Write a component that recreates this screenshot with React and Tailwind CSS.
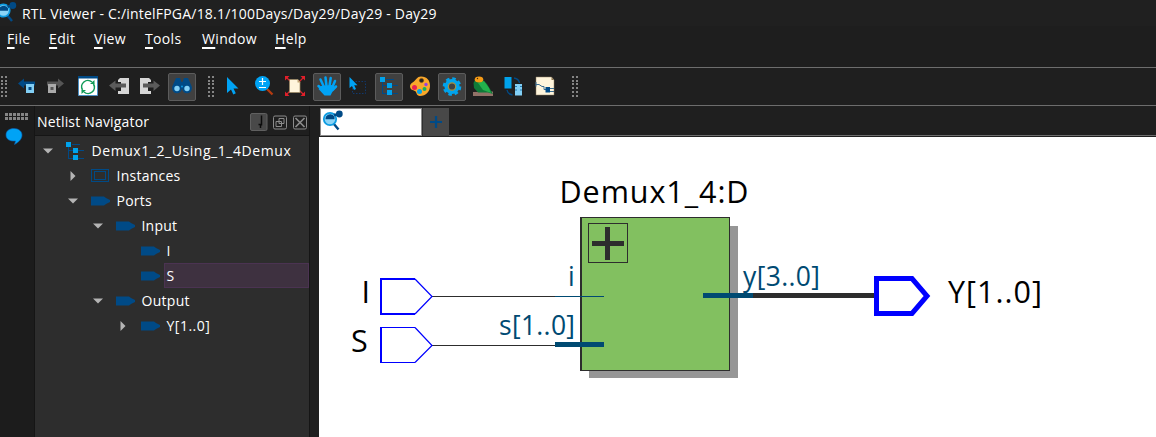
import React from "react";

/* Drawings use window coordinates, so each one crops its own region. */
function Pic({ x, y, w, h, children, className = "" }) {
  return (
    <svg className={"block shrink-0 " + className} width={w} height={h} viewBox={`${x} ${y} ${w} ${h}`}>
      {children}
    </svg>
  );
}

function Slot({ x, w, active, bx, children }) {
  if (active) {
    return (
      <div className="flex h-9 shrink-0 items-center justify-center" style={{ width: w }}>
        <button className="flex h-7 w-7 items-center justify-center rounded-[2px] border border-[#5c5c5c] bg-[#404040]">
          <Pic x={bx + 1} y={74} w={26} h={26}>{children}</Pic>
        </button>
      </div>
    );
  }
  return <Pic x={x} y={69} w={w} h={36}>{children}</Pic>;
}

function Grip({ x, cols = 2 }) {
  const dots = [];
  for (let r = 0; r < 6; r++) {
    for (let c = 0; c < cols; c++) {
      dots.push(<rect key={`${r}-${c}`} x={x + c * 4} y={76 + r * 3.7} width="2" height="2" />);
    }
  }
  return <g fill="#858585" shapeRendering="crispEdges">{dots}</g>;
}

function Viewer({ x, y }) {
  return (
    <g transform={`translate(${x} ${y})`}>
      <path d="M11 13l5 6" stroke="#004a86" strokeWidth="2.4" />
      <circle cx="7.5" cy="8.5" r="6.2" fill="#8ad4f7" stroke="#0d9ce2" strokeWidth="1.8" />
      <path d="M3 8.8a4.8 4.8 0 0 1 9-2.600V8.8Z" fill="#004a86" />
      <circle cx="16.8" cy="3.5" r="3.4" fill="#004a86" />
      <path d="M11 3h4v2l-3 1z" fill="#004a86" />
    </g>
  );
}

function Hierarchy({ x, y }) {
  return (
    <g transform={`translate(${x} ${y})`} shapeRendering="crispEdges">
      <path d="M6 2.500h8M2.500 5v11.500h5M2.500 8.500h5M12 8.500h6M12 16.500h6" fill="none" stroke="#004a86" />
      <path d="M0 0h5v5H0zM7 6h5v5H7zM7 13h5v5H7z" fill="#00a3ec" />
    </g>
  );
}

function Toolbar() {
  return (
    <div className="flex h-[39px] shrink-0 items-center border-y border-[#6d6d6d] bg-[#1f1f1f]">
      <Slot x={0} w={11}><Grip x={-3} cols={3} /></Slot>
      <Slot x={11} w={31}>
        <path d="M18 83.500l6-5v3h11v4H24v3z" fill="#004a86" />
        <path d="M26 84h8v9h-8z" fill="#82cff5" /><path d="M28.500 87h3v3h-3z" fill="#004a86" />
      </Slot>
      <Slot x={42} w={30}>
        <path d="M64 83.500l-6-5v3H47v4h11v3z" fill="#555" />
        <path d="M48 84h8v9h-8z" fill="#aaa" /><path d="M50.500 87h3v3h-3z" fill="#555" />
      </Slot>
      <Slot x={72} w={32}>
        <path d="M78.500 76.500h19v19h-19z" fill="#fff" stroke="#4b8fc3" /><path d="M78 76h20v2.500H78z" fill="#004a86" />
        <path d="M82.500 90a6.300 6.300 0 0 1 9.500-8M93.500 84a6.300 6.300 0 0 1-9.500 8" fill="none" stroke="#119a58" strokeWidth="1.600" />
        <path d="M94.500 80v4h-4.500zM81.500 94v-4H86z" fill="#119a58" />
      </Slot>
      <Slot x={104} w={31}>
        <path d="M120 78h9v16h-11v-3h3v-9h-3v-2z" fill="#d6d6d6" />
        <path d="M109 85.500l6.500-5v3H126v4h-10.500v3.500z" fill="#5b5b5b" />
      </Slot>
      <Slot x={135} w={31}>
        <path d="M140 78h9l2 2v2h-3v9h3v3h-11z" fill="#d6d6d6" />
        <path d="M160 85.500l-6.500-5v3H143v4h10.500v3.500z" fill="#5b5b5b" />
      </Slot>
      <Slot x={166} w={32} active bx={168}>
        <path d="M176 78h4l1.500 4h1l1.500-4h4l3.500 8v3h-19v-3z" fill="#004a86" />
        <circle cx="177" cy="88.500" r="4.800" fill="#004a86" /><circle cx="187" cy="88.500" r="4.800" fill="#004a86" />
        <circle cx="177" cy="88.500" r="2.700" fill="#82cff5" /><circle cx="187" cy="88.500" r="2.700" fill="#82cff5" />
        <circle cx="182" cy="86.500" r="1" fill="#0d9ce2" />
      </Slot>
      <Slot x={198} w={22}><Grip x={208} /></Slot>
      <Slot x={220} w={28}>
        <path d="M227 77v16l4-3.500 2.300 5 2.500-1.200-2.300-4.800h5z" fill="#00a3f5" />
      </Slot>
      <Slot x={248} w={31}>
        <path d="M267 89l5.500 5.500" stroke="#b63b10" strokeWidth="2.300" />
        <circle cx="262.500" cy="83.500" r="7.500" fill="#00a3f5" />
        <path d="M259 81.500h7M262.500 78v7M259 87.500h7" stroke="#fff" strokeWidth="1.200" />
      </Slot>
      <Slot x={279} w={32}>
        <path d="M286 77l18 18M304 77l-18 18" stroke="#d8222b" strokeWidth="1.200" />
        <path d="M285 76h4.500L285 80.500zM305 76h-4.500l4.500 4.500zM285 96h4.500L285 91.500zM305 96h-4.500l4.500-4.500z" fill="#e21f2a" />
        <path d="M289.500 79.500h8.500l2 2.500v10.500h-10.500z" fill="#fff5dc" stroke="#9c8660" strokeWidth=".7" /><path d="M297.500 79.500v3h3z" fill="#c2a574" />
      </Slot>
      <Slot x={311} w={32} active bx={313}>
        <g fill="none" stroke="#00a3f5" strokeLinecap="round" strokeWidth="2.500">
          <path d="M324 87l-3.500-7.500M326.500 86l-1-8.500M329.500 86l1.200-8M332 88l3-7M323 90l-4.500-4M332.500 90l3.500-3.500" />
        </g>
        <path d="M321 86l11-1 3 3-3 4.500-1.500 3h-6L318.500 89z" fill="#00a3f5" />
      </Slot>
      <Slot x={343} w={30}>
        <path d="M352.500 81.500h13v12h-13z" fill="none" stroke="#11396e" strokeDasharray="1.500 1.500" />
        <path d="M349.500 77v11l2.500-2 2 4 2-1-1.800-3.700h3.300z" fill="#00a3f5" />
      </Slot>
      <Slot x={373} w={32} active bx={375}><Hierarchy x={380} y={77} /></Slot>
      <Slot x={405} w={31}>
        <path d="M421 76.500c6 0 9 4 9 9.500s-4 10-10 10c-4 0-3-4-5-5s-5-1-5-5c0-2 2-3 4-4.500 2-1.500 3-5 7-5z" fill="#f8a72b" />
        <circle cx="421.500" cy="80.500" r="2.100" fill="#242424" stroke="#704713" strokeWidth=".6" />
        <circle cx="414.500" cy="87.500" r="2.500" fill="#e92053" /><circle cx="419.500" cy="91.500" r="2.500" fill="#00a3ec" />
        <circle cx="424.500" cy="89" r="2" fill="#14b35d" /><circle cx="426" cy="84.500" r="1.700" fill="#993fe0" />
      </Slot>
      <Slot x={436} w={32} active bx={438}>
        <circle cx="452" cy="86.500" r="7.600" fill="#00a3ec" />
        <circle cx="452" cy="86.500" r="8" fill="none" stroke="#00a3ec" strokeWidth="2.600" strokeDasharray="3.500 2.780" />
        <circle cx="452" cy="86.500" r="3.700" fill="#404040" stroke="#a39346" strokeWidth="1.200" />
      </Slot>
      <Slot x={468} w={30}>
        <path d="M473 92L493 91.500V96H473z" fill="#927268" />
        <path d="M475 80L483 80L487 84L493 94L488 92.500L478 92.500L474 88L473.500 83z" fill="#0f7a38" />
        <path d="M478 83L484 81L489 88L491 93L483 90z" fill="#23b14d" />
        <ellipse cx="479" cy="79.500" rx="4.300" ry="3" fill="#f69b16" />
        <circle cx="477.500" cy="78.500" r=".7" fill="#3b2a10" />
      </Slot>
      <Slot x={498} w={32}>
        <path d="M504.500 77h7v11.500h-7z" fill="#00a3ec" /><path d="M515 84h7v11.500h-7z" fill="#82cff5" />
        <path d="M514 78c3 .5 5 2 5.500 5M507 90c.5 3 2 4.500 5.500 5" fill="none" stroke="#004a86" strokeWidth="1.400" />
        <path d="M515 86.500h2M520 86.500h2M515 90h2M520 90h2" stroke="#257aae" />
      </Slot>
      <Slot x={530} w={31}>
        <path d="M536 77h15.500l2.500 3v15h-18z" fill="#fff5dc" stroke="#8f7f62" strokeWidth=".5" /><path d="M551.500 77v3h2.500z" fill="#8d7651" />
        <path d="M536 84.500h3l3 2h2v3h2M536 82v4.500M549 88.500h5M549 91.500h5" fill="none" stroke="#3c6f94" />
        <path d="M545.500 87h4.500v5.500h-4.500z" fill="#004a86" />
      </Slot>
      <Slot x={561} w={30}><Grip x={572} /></Slot>
    </div>
  );
}

function Arrow({ open }) {
  return (
    <svg className="block shrink-0" width="10" height="10" viewBox="0 0 10 10">
      <path d={open ? "M0 2.500h10L5 7.500z" : "M2.500 0v10L7.500 5z"} fill="#b4b4b4" />
    </svg>
  );
}

function PortIcon() {
  return (
    <svg className="block shrink-0" width="19" height="10" viewBox="0 0 19 10">
      <path d="M0 .5h13l2 1.500 4 2v2l-4 2-2 1.500H0z" fill="#004a86" />
    </svg>
  );
}

function Row({ indent, arrow, icon, label, selected, text = "" }) {
  return (
    <div className={"flex h-[25px] items-center " + indent}>
      <div className="flex w-[23px] shrink-0 items-center">{arrow && <Arrow open={arrow === "open"} />}</div>
      <div className="flex w-[23px] shrink-0 items-center">{icon}</div>
      <div className={"flex h-[25px] grow items-center border pl-[1.5px] whitespace-pre " + (selected ? "border-[#4b3352] bg-[#3e3140]" : "border-transparent")}>
        <span className={text}>{label}</span>
      </div>
    </div>
  );
}

function Navigator() {
  return (
    <aside className="flex w-[276px] shrink-0 flex-col border-x border-[#151515]">
      <div className="mt-[2px] flex h-[28px] shrink-0 items-center border-b border-[#151515] pl-[2px] pr-[2px] text-[14px]">
        <span className="grow tracking-[0.180px]">Netlist Navigator</span>
        <Pic x={249} y={112} w={58} h={20}>
          <rect x="250.500" y="113.500" width="16.500" height="17" rx="1.500" fill="#494949" stroke="#606060" />
          <path d="M261.500 115.500v10M258.500 124.500h3M260.500 125v3" stroke="#0c0c0c" strokeWidth="1.500" />
          <g fill="none" stroke="#8b8b8b">
            <rect x="273.500" y="116" width="13" height="13" rx="1.500" />
            <path d="M279 118.500h5v5h-5zM276 121.500h5.500v5H276z" />
            <rect x="293.500" y="116" width="13" height="13" rx="1.500" />
            <path d="M295.500 118l9 9M304.500 118l-9 9" strokeWidth="1.700" />
          </g>
        </Pic>
      </div>
      <div className="grow bg-[#2d2d2d] pt-[2px] text-[14px]">
        <Row indent="pl-[8px]" arrow="open" icon={<Pic x={0} y={0} w={19} h={18}><Hierarchy x={0} y={0} /></Pic>} label="Demux1_2_Using_1_4Demux" text="tracking-[0.560px]" />
        <Row indent="pl-[33px]" arrow="shut" icon={
          <svg width="18" height="14" viewBox="0 0 18 14" fill="none" stroke="#004a86" shapeRendering="crispEdges">
            <path d="M.5.500h17v12H.5zM3.500 2.500h11v8h-11z" />
          </svg>} label="Instances" text="tracking-[0.250px]" />
        <Row indent="pl-[33px]" arrow="open" icon={<PortIcon />} label="Ports" text="tracking-[0.250px]" />
        <Row indent="pl-[58px]" arrow="open" icon={<PortIcon />} label="Input" text="tracking-[0.200px]" />
        <Row indent="pl-[83px]" icon={<PortIcon />} label="I" />
        <Row indent="pl-[83px]" icon={<PortIcon />} label="S" selected />
        <Row indent="pl-[58px]" arrow="open" icon={<PortIcon />} label="Output" text="tracking-[0.300px]" />
        <Row indent="pl-[83px]" arrow="shut" icon={<PortIcon />} label="Y[1..0]" text="tracking-[0.500px]" />
      </div>
    </aside>
  );
}

function Schematic() {
  return (
    <svg className="block" width="837" height="300" viewBox="319 137 837 300" fontFamily="'Open Sans', 'Noto Sans', sans-serif">
      <rect x="589" y="226" width="149" height="152" fill="#969696" />
      <rect x="581" y="217.500" width="148.500" height="153" fill="#82c060" stroke="#2d2d2d" />
      <path d="M581 217v154" stroke="#2d2d2d" strokeWidth="2" />
      <rect x="588.500" y="223.500" width="39" height="39" fill="none" stroke="#2d2d2d" />
      <path d="M607.500 227v33M592 243.500h32" stroke="#2d2d2d" strokeWidth="5" />
      <g shapeRendering="crispEdges">
        <path d="M432 296.500h123M432 345.500h123" stroke="#2d2d2d" />
        <path d="M555 296.500h49" stroke="#004a72" />
        <path d="M555 344.500h49M703 295.500h50" stroke="#004a72" strokeWidth="5" />
        <path d="M753 295.500h123" stroke="#2d2d2d" strokeWidth="5" />
      </g>
      <g fill="none" stroke="#0000ff">
        <path d="M415 279H381V314H415" strokeWidth="2" /><path d="M415 279l17 17.500L415 314" strokeWidth="1.200" />
        <path d="M415 327.500H381V362.500H415" strokeWidth="1.200" /><path d="M415 327.500l17 18L415 362.500" strokeWidth="1.200" />
        <path d="M381 327v36" strokeWidth="2" />
        <path d="M876.500 278.500H912L927 296L912 313.500H876.500z" strokeWidth="5" />
      </g>
      <g fill="#000" fontSize="30.500">
        <text x="559.500" y="203" textLength="189">Demux1_4:D</text>
        <text x="361.500" y="303">I</text>
        <text x="351" y="352">S</text>
        <text x="948" y="303" textLength="94">Y[1..0]</text>
      </g>
      <g fill="#004a72" fontSize="26.500">
        <text x="568" y="286">i</text>
        <text x="499" y="335" textLength="76">s[1..0]</text>
        <text x="743" y="286" textLength="77">y[3..0]</text>
      </g>
    </svg>
  );
}

const MENU = [
  ["F", "ile", "w-[42px]"], ["E", "dit", "w-[45px]"], ["V", "iew", "w-[51px]"],
  ["T", "ools", "w-[57px]"], ["W", "indow", "w-[73px]"], ["H", "elp", "w-[40px]"],
];

export default function App() {
  return (
    <div className="flex h-[437px] w-[1156px] flex-col overflow-hidden bg-[#1f1f1f] font-['Open_Sans','Noto_Sans',sans-serif] text-white">
      <header className="flex h-[26px] shrink-0 items-center bg-[#202020]">
        <Pic x={0} y={0} w={22} h={26}><Viewer x={-4} y={2} /></Pic>
        <span className="text-[14px] tracking-[0.210px] whitespace-pre">RTL Viewer - C:/intelFPGA/18.1/100Days/Day29/Day29 - Day29</span>
      </header>
      <nav className="flex h-[41px] shrink-0 items-start bg-[#1e1e1e] pt-[2px] pl-[7px] text-[14px] leading-[22px] tracking-[0.350px]">
        {MENU.map(([key, rest, w]) => (
          <span key={key} className={"whitespace-pre " + w}>
            <span className="underline decoration-2 underline-offset-[3px] [text-decoration-skip-ink:none]">{key}</span>{rest}
          </span>
        ))}
      </nav>
      <Toolbar />
      <div className="flex min-h-0 grow">
        <div className="w-[34px] shrink-0 bg-[#1c1c1c]">
          <Pic x={0} y={106} w={34} h={44}>
            <g fill="#858585" shapeRendering="crispEdges">
              {[5, 9, 13, 17, 21, 25].map((x) => (
                <React.Fragment key={x}>
                  <rect x={x} y="113" width="3" height="3" /><rect x={x} y="117" width="3" height="3" />
                </React.Fragment>
              ))}
            </g>
            <path d="M14 128.500c5 0 8 3 8 6.500 0 4-3 7-7.500 9.500l1-3.500c-6 .5-9.500-2-9.500-6s3-6.500 8-6.500z" fill="#00a3f5" stroke="#0b5cb0" strokeWidth=".6" />
          </Pic>
        </div>
        <Navigator />
        <main className="flex grow flex-col pl-[9px]">
          <div className="flex h-[31px] shrink-0 items-start pt-[2px] pl-[1px]">
            <div className="h-[28px] w-[102px] border border-[#8a8a8a] bg-white">
              <Pic x={321} y={109} w={24} h={26}><Viewer x={322.500} y={110.500} /></Pic>
            </div>
            <div className="flex h-[28px] w-[27px] items-center justify-center border-l border-[#303030] bg-[#484848]">
              <Pic x={0} y={0} w={14} h={14}><path d="M7 1v12M1 7h12" stroke="#004a86" strokeWidth="2.200" /></Pic>
            </div>
            <div className="h-[28px] grow border-b border-[#6d6d6d]" />
          </div>
          <div className="grow bg-white"><Schematic /></div>
        </main>
      </div>
    </div>
  );
}
